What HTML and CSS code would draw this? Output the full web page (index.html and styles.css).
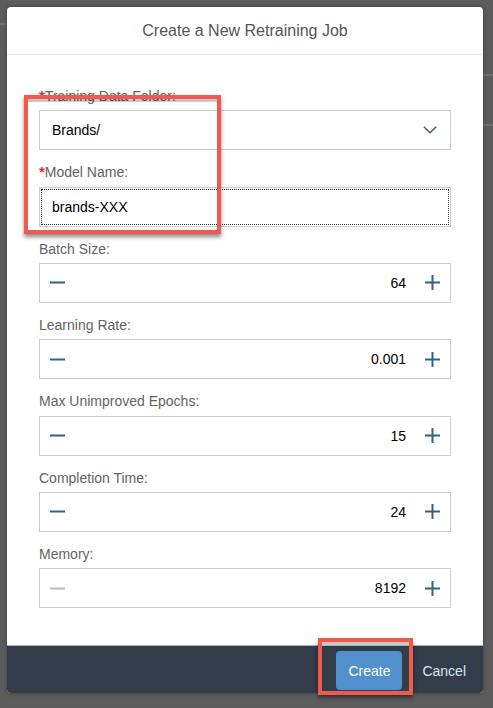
FILE: index.html
```html
<!DOCTYPE html>
<html lang="en">
<head>
<meta charset="utf-8">
<title>Create a New Retraining Job</title>
<link rel="stylesheet" href="styles.css">
</head>
<body>
<div class="dialog">
  <div class="dialog-header">Create a New Retraining Job</div>
  <div class="dialog-body">
    <div class="field">
      <div class="label"><span class="req">*</span>Training Data Folder:</div>
      <div class="box select">
        <span class="text">Brands/</span>
        <svg class="chev" width="14" height="8" viewBox="0 0 14 8"><polyline points="0.8,0.8 7,6.8 13.2,0.8" fill="none" stroke="#346187" stroke-width="1.5"/></svg>
      </div>
    </div>
    <div class="field">
      <div class="label"><span class="req">*</span>Model Name:</div>
      <div class="box input focused"><span class="text">brands-XXX</span></div>
    </div>
    <div class="field">
      <div class="label">Batch Size:</div>
      <div class="box stepper">
        <span class="step minus"><svg width="15" height="15" viewBox="0 0 15 15"><rect x="0" y="6.5" width="15" height="2" fill="#346187"/></svg></span>
        <span class="value">64</span>
        <span class="step plus"><svg width="15" height="15" viewBox="0 0 15 15"><rect x="0" y="6.5" width="15" height="2" fill="#346187"/><rect x="6.5" y="0" width="2" height="15" fill="#346187"/></svg></span>
      </div>
    </div>
    <div class="field">
      <div class="label">Learning Rate:</div>
      <div class="box stepper">
        <span class="step minus"><svg width="15" height="15" viewBox="0 0 15 15"><rect x="0" y="6.5" width="15" height="2" fill="#346187"/></svg></span>
        <span class="value">0.001</span>
        <span class="step plus"><svg width="15" height="15" viewBox="0 0 15 15"><rect x="0" y="6.5" width="15" height="2" fill="#346187"/><rect x="6.5" y="0" width="2" height="15" fill="#346187"/></svg></span>
      </div>
    </div>
    <div class="field">
      <div class="label">Max Unimproved Epochs:</div>
      <div class="box stepper">
        <span class="step minus"><svg width="15" height="15" viewBox="0 0 15 15"><rect x="0" y="6.5" width="15" height="2" fill="#346187"/></svg></span>
        <span class="value">15</span>
        <span class="step plus"><svg width="15" height="15" viewBox="0 0 15 15"><rect x="0" y="6.5" width="15" height="2" fill="#346187"/><rect x="6.5" y="0" width="2" height="15" fill="#346187"/></svg></span>
      </div>
    </div>
    <div class="field">
      <div class="label">Completion Time:</div>
      <div class="box stepper">
        <span class="step minus"><svg width="15" height="15" viewBox="0 0 15 15"><rect x="0" y="6.5" width="15" height="2" fill="#346187"/></svg></span>
        <span class="value">24</span>
        <span class="step plus"><svg width="15" height="15" viewBox="0 0 15 15"><rect x="0" y="6.5" width="15" height="2" fill="#346187"/><rect x="6.5" y="0" width="2" height="15" fill="#346187"/></svg></span>
      </div>
    </div>
    <div class="field">
      <div class="label">Memory:</div>
      <div class="box stepper">
        <span class="step minus"><svg width="15" height="15" viewBox="0 0 15 15"><rect x="0" y="6.5" width="15" height="2" fill="#a9c0d6"/></svg></span>
        <span class="value">8192</span>
        <span class="step plus"><svg width="15" height="15" viewBox="0 0 15 15"><rect x="0" y="6.5" width="15" height="2" fill="#346187"/><rect x="6.5" y="0" width="2" height="15" fill="#346187"/></svg></span>
      </div>
    </div>
  </div>
  <div class="dialog-footer">
    <button class="btn-create">Create</button>
    <button class="btn-cancel">Cancel</button>
  </div>
  <div class="highlight hl-fields"></div>
  <div class="highlight hl-create"></div>
</div>
</body>
</html>
```

FILE: styles.css
```css
html, body {
  margin: 0;
  padding: 0;
}

body {
  width: 493px;
  height: 708px;
  overflow: hidden;
  font-family: "Liberation Sans", Arial, sans-serif;
  background:
    linear-gradient(#6f6f6f, #6f6f6f) 0 23px / 7px 2px no-repeat,
    linear-gradient(#6f6f6f, #6f6f6f) 483px 74px / 10px 2px no-repeat,
    linear-gradient(#6f6f6f, #6f6f6f) 483px 124px / 10px 2px no-repeat,
    #5c5c5c;
}

.dialog {
  position: relative;
  margin: 7px 0 0 7px;
  width: 476px;
  background: #ffffff;
  border-radius: 4px;
  box-shadow: 0 0 4px rgba(0, 0, 0, 0.35);
}

.dialog-header {
  height: 47px;
  display: flex;
  align-items: center;
  justify-content: center;
  border-bottom: 1px solid #e5e5e5;
  font-size: 16px;
  color: #555555;
}

.dialog-body {
  padding: 19px 32px 37px;
}

.field {
  display: flex;
  flex-direction: column;
}

.label {
  margin-top: 14px;
  margin-bottom: 5px;
  font-size: 14px;
  line-height: 17.33px;
  height: 17.33px;
  color: #636363;
}

.req {
  color: #d0343a;
  font-weight: bold;
  font-size: 15px;
  line-height: 0;
}

.box {
  box-sizing: border-box;
  height: 40px;
  border: 1px solid #cccccc;
  display: flex;
  align-items: center;
  font-size: 14px;
  color: #000000;
  background: #ffffff;
}

.box .text {
  padding-left: 12px;
}

.select {
  justify-content: space-between;
}

.chev {
  margin-right: 13px;
}

.focused {
  outline: 1px dotted #333333;
  outline-offset: -3px;
}

.stepper .step {
  display: flex;
  align-items: center;
  justify-content: center;
}

.stepper .minus {
  width: 35px;
}

.stepper .plus {
  width: 36px;
}

.stepper .value {
  flex: 1;
  text-align: right;
  padding-right: 8px;
}

.dialog-footer {
  box-sizing: border-box;
  height: 48px;
  background: #323d49;
  border-top: 1px solid #a9b4c0;
  border-radius: 0 0 4px 4px;
  display: flex;
  justify-content: flex-end;
  align-items: flex-start;
  padding: 5px 9px 0 0;
  gap: 12px;
}

.dialog-footer button {
  font-family: "Liberation Sans", Arial, sans-serif;
  font-size: 14px;
  border: none;
  height: 39px;
  cursor: pointer;
}

.btn-create {
  width: 66px;
  border-radius: 4px;
  background: #4f90cd;
  color: #ffffff;
  padding: 0;
}

.btn-cancel {
  background: transparent;
  color: #d3e6f6;
  padding: 0 8px;
}

.highlight {
  position: absolute;
  box-sizing: border-box;
  border: 4px solid #ef5a4c;
  box-shadow: 0 3px 4px rgba(0, 0, 0, 0.45), inset 0 3px 1px rgba(0, 0, 0, 0.22);
}

.hl-fields {
  left: 17px;
  top: 88px;
  width: 197px;
  height: 139px;
}

.hl-create {
  left: 311px;
  top: 631px;
  width: 95px;
  height: 57px;
}
```
